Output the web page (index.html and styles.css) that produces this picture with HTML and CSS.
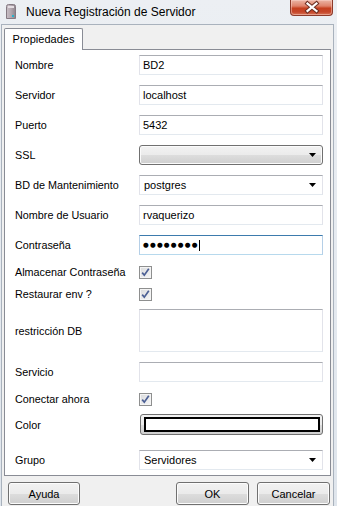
FILE: index.html
```html
<!DOCTYPE html>
<html lang="es">
<head>
  <meta charset="UTF-8">
  <title>Nueva Registración de Servidor</title>
  <link rel="stylesheet" href="styles.css">
</head>
<body>

  <div class="window">
    <div class="titlebar">
      <svg class="app-icon" width="12" height="15" viewBox="0 0 12 15">
        <defs>
          <linearGradient id="tower" x1="0" y1="0" x2="1" y2="0">
            <stop offset="0" stop-color="#c9bfc6"/>
            <stop offset="0.5" stop-color="#b3a8b0"/>
            <stop offset="1" stop-color="#8e848c"/>
          </linearGradient>
        </defs>
        <path d="M1.5 2.5 Q1.5 0.5 3.5 0.5 H8.5 Q10.5 0.5 10.5 2.5 V14.5 H1.5 Z" fill="url(#tower)" stroke="#857a83"/>
        <rect x="3" y="2" width="6" height="2" fill="#e4dde2"/>
        <rect x="7" y="11" width="2" height="2" fill="#27b3cc"/>
      </svg>
      <span class="title">Nueva Registración de Servidor</span>
      <div class="close-btn">
        <svg width="43" height="16" viewBox="0 0 43 16">
          <path d="M17.5 3.5 L26.5 11 M26.5 3.5 L17.5 11" stroke="#6b2e22" stroke-width="4.2" stroke-linecap="square"/>
          <path d="M17.5 3.5 L26.5 11 M26.5 3.5 L17.5 11" stroke="#ffffff" stroke-width="2.2" stroke-linecap="square"/>
        </svg>
      </div>
    </div>

    <div class="client">
      <div class="tabs">
        <div class="tab active">Propiedades</div>
      </div>

      <div class="panel">
        <div class="row">
          <label>Nombre</label>
          <div class="textbox">BD2</div>
        </div>
        <div class="row">
          <label>Servidor</label>
          <div class="textbox">localhost</div>
        </div>
        <div class="row">
          <label>Puerto</label>
          <div class="textbox">5432</div>
        </div>
        <div class="row">
          <label>SSL</label>
          <div class="dropdown">
            <svg class="arrow" width="7" height="4" viewBox="0 0 7 4"><path d="M0 0 H7 L3.5 4 Z" fill="#000"/></svg>
          </div>
        </div>
        <div class="row">
          <label>BD de Mantenimiento</label>
          <div class="textbox combo">
            <span>postgres</span>
            <svg class="arrow" width="7" height="4" viewBox="0 0 7 4"><path d="M0 0 H7 L3.5 4 Z" fill="#000"/></svg>
          </div>
        </div>
        <div class="row">
          <label>Nombre de Usuario</label>
          <div class="textbox">rvaquerizo</div>
        </div>
        <div class="row">
          <label>Contraseña</label>
          <div class="textbox focused"><span class="dots">●●●●●●●●</span><span class="caret"></span></div>
        </div>

        <div class="row check-row first-check">
          <label>Almacenar Contraseña</label>
          <span class="check">
            <svg width="11" height="11" viewBox="0 0 11 11"><path d="M2.2 5.6 L4.3 8.2 L8.8 1.8" fill="none" stroke="#4b5f94" stroke-width="1.7"/></svg>
          </span>
        </div>
        <div class="row check-row">
          <label>Restaurar env ?</label>
          <span class="check">
            <svg width="11" height="11" viewBox="0 0 11 11"><path d="M2.2 5.6 L4.3 8.2 L8.8 1.8" fill="none" stroke="#4b5f94" stroke-width="1.7"/></svg>
          </span>
        </div>
        <div class="row area-row">
          <label>restricción DB</label>
          <div class="textbox area"></div>
        </div>
        <div class="row service-row">
          <label>Servicio</label>
          <div class="textbox"></div>
        </div>
        <div class="row check-row connect-row">
          <label>Conectar ahora</label>
          <span class="check">
            <svg width="11" height="11" viewBox="0 0 11 11"><path d="M2.2 5.6 L4.3 8.2 L8.8 1.8" fill="none" stroke="#4b5f94" stroke-width="1.7"/></svg>
          </span>
        </div>
        <div class="row color-row">
          <label>Color</label>
          <div class="color-btn"><span class="swatch"></span></div>
        </div>
        <div class="row group-row">
          <label>Grupo</label>
          <div class="textbox combo">
            <span>Servidores</span>
            <svg class="arrow" width="7" height="4" viewBox="0 0 7 4"><path d="M0 0 H7 L3.5 4 Z" fill="#000"/></svg>
          </div>
        </div>
      </div>

      <div class="buttons">
        <button class="btn help">Ayuda</button>
        <button class="btn ok">OK</button>
        <button class="btn">Cancelar</button>
      </div>
    </div>
  </div>

</body>
</html>
```

FILE: styles.css
```css
/* Ventana general */
body {
  margin: 0;
  font-family: "Liberation Sans", Arial, sans-serif;
  font-size: 11px;
  color: #000;
}

.window {
  width: 337px;
  height: 506px;
  overflow: hidden;
  background: linear-gradient(#eceff3, #dfe5ec);
}

/* Barra de titulo */
.titlebar {
  height: 24px;
  display: flex;
  align-items: flex-start;
}

.app-icon {
  margin: 4px 0 0 5px;
}

.title {
  margin: 5px 0 0 9px;
  font-size: 12px;
  line-height: 15px;
}

.close-btn {
  margin-left: auto;
  margin-right: 4px;
  width: 43px;
  height: 16px;
  box-sizing: border-box;
  border: 1px solid #8d3a2a;
  border-top: none;
  border-radius: 0 0 4px 4px;
  background: linear-gradient(#ebb5a5 0%, #df836b 40%, #c5401f 55%, #c6472b 80%, #d8775a 100%);
  box-shadow: inset 0 0 0 1px rgba(255, 220, 210, 0.45);
}

.close-btn svg {
  display: block;
  margin-left: -1px;
}

/* Area cliente */
.client {
  margin: 0 3px 0 1px;
  height: 482px;
  box-sizing: border-box;
  padding: 3px 3px 0 1px;
  border: 1px solid #a9b2bd;
  border-bottom: none;
  background: #f0f0f0;
}

/* Pestanas */
.tabs {
  display: flex;
  padding-left: 1px;
}

.tab {
  position: relative;
  z-index: 1;
  width: 79px;
  height: 22px;
  box-sizing: border-box;
  border: 1px solid #898c95;
  border-bottom: none;
  border-radius: 2px 2px 0 0;
  margin-bottom: -1px;
  padding-bottom: 1px;
  background: #fff;
  display: flex;
  align-items: center;
  justify-content: center;
}

.panel {
  margin-left: 1px;
  width: 327px;
  box-sizing: border-box;
  border: 1px solid #898c95;
  background: #fff;
  padding: 5px 7px 5px 10px;
}

/* Filas del formulario */
.row {
  display: flex;
  align-items: center;
  height: 20px;
  margin-top: 10px;
}

.row:first-child {
  margin-top: 0;
}

.row label {
  width: 124px;
  flex-shrink: 0;
  font-size: 10.8px;
}

.check-row {
  height: 22px;
  margin-top: 0;
}

.first-check {
  margin-top: 6px;
}

.area-row {
  height: 43px;
  margin-top: 4px;
}

.service-row {
  margin-top: 10px;
}

.connect-row {
  margin-top: 6px;
}

.color-row {
  height: 21px;
  margin-top: 4px;
}

.group-row {
  margin-top: 15px;
}

/* Cajas de texto */
.textbox {
  width: 184px;
  height: 20px;
  box-sizing: border-box;
  border: 1px solid;
  border-color: #abadb3 #e2e3ea #e3e9ef #e2e3ea;
  padding: 0 3px;
  display: flex;
  align-items: center;
  background: #fff;
}

.textbox.area {
  height: 43px;
}

.textbox.focused {
  border-color: #3d7bad #b5cfe7 #b7d9ed #b5cfe7;
}

.dots {
  font-family: "DejaVu Sans", sans-serif;
  font-size: 6.6px;
  letter-spacing: 1.2px;
  line-height: 10px;
}

.caret {
  width: 1px;
  height: 11px;
  background: #000;
}

/* Combos */
.combo {
  justify-content: space-between;
  padding: 0 6px 0 4px;
}

.dropdown {
  width: 184px;
  height: 20px;
  box-sizing: border-box;
  border: 1px solid #707070;
  border-radius: 3px;
  background: linear-gradient(#f2f2f2 0%, #ebebeb 50%, #dddddd 51%, #cfcfcf 100%);
  box-shadow: inset 0 0 0 1px #fbfbfb;
  display: flex;
  align-items: center;
  justify-content: flex-end;
  padding-right: 6px;
}

.arrow {
  display: block;
}

/* Casillas */
.check {
  width: 13px;
  height: 13px;
  box-sizing: border-box;
  border: 1px solid #8e8f8f;
  background: linear-gradient(135deg, #d9dadc, #f6f6f6);
  box-shadow: inset 0 0 0 1px #f4f4f4;
  display: flex;
  align-items: center;
  justify-content: center;
}

.check svg {
  display: block;
}

/* Boton de color */
.color-btn {
  width: 183px;
  height: 21px;
  margin-left: 1px;
  box-sizing: border-box;
  border: 1px solid #707070;
  border-radius: 3px;
  background: linear-gradient(#f2f2f2 0%, #ebebeb 50%, #dddddd 51%, #cfcfcf 100%);
  padding: 2px 2px 2px 3px;
}

.swatch {
  display: block;
  height: 100%;
  box-sizing: border-box;
  border: 2px solid #000;
  background: #fff;
}

/* Botones inferiores */
.buttons {
  display: flex;
  margin-top: 6px;
  padding-left: 5px;
}

.btn {
  width: 73px;
  height: 23px;
  box-sizing: border-box;
  border: 1px solid #707070;
  border-radius: 3px;
  background: linear-gradient(#f2f2f2 0%, #ebebeb 50%, #dddddd 51%, #cfcfcf 100%);
  box-shadow: inset 0 0 0 1px #fcfcfc;
  font-family: "Liberation Sans", Arial, sans-serif;
  font-size: 11px;
  color: #000;
  padding: 0;
}

.btn.help {
  width: 72px;
}

.btn.ok {
  margin-left: auto;
  margin-right: 8px;
}
```
